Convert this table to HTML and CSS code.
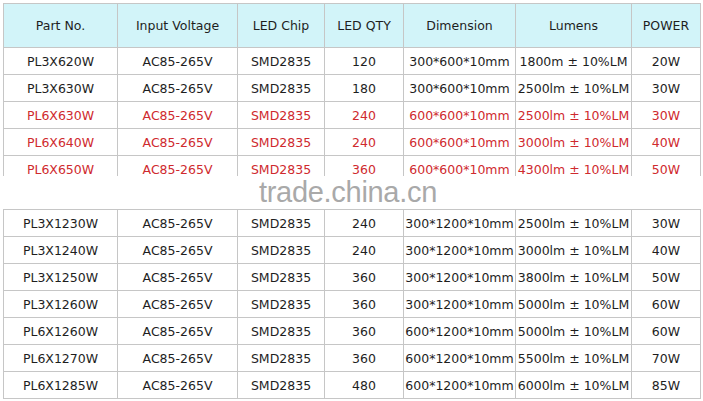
FILE: index.html
```html
<!DOCTYPE html>
<html>
<head>
<meta charset="utf-8">
<link rel="stylesheet" href="styles.css">
</head>
<body>
<div class="page">
  <div class="top">
    <table class="spec">
      <colgroup>
        <col class="c1"><col class="c2"><col class="c3"><col class="c4"><col class="c5"><col class="c6"><col class="c7">
      </colgroup>
      <tr class="head">
        <td>Part No.</td><td>Input Voltage</td><td>LED Chip</td><td>LED QTY</td><td>Dimension</td><td>Lumens</td><td>POWER</td>
      </tr>
      <tr><td>PL3X620W</td><td>AC85-265V</td><td>SMD2835</td><td>120</td><td>300*600*10mm</td><td>1800m ± 10%LM</td><td>20W</td></tr>
      <tr><td>PL3X630W</td><td>AC85-265V</td><td>SMD2835</td><td>180</td><td>300*600*10mm</td><td>2500lm ± 10%LM</td><td>30W</td></tr>
      <tr class="red"><td>PL6X630W</td><td>AC85-265V</td><td>SMD2835</td><td>240</td><td>600*600*10mm</td><td>2500lm ± 10%LM</td><td>30W</td></tr>
      <tr class="red"><td>PL6X640W</td><td>AC85-265V</td><td>SMD2835</td><td>240</td><td>600*600*10mm</td><td>3000lm ± 10%LM</td><td>40W</td></tr>
      <tr class="red"><td>PL6X650W</td><td>AC85-265V</td><td>SMD2835</td><td>360</td><td>600*600*10mm</td><td>4300lm ± 10%LM</td><td>50W</td></tr>
    </table>
  </div>
  <div class="band"><span class="mark">trade.china.cn</span></div>
  <table class="spec">
    <colgroup>
      <col class="c1"><col class="c2"><col class="c3"><col class="c4"><col class="c5"><col class="c6"><col class="c7">
    </colgroup>
    <tr><td>PL3X1230W</td><td>AC85-265V</td><td>SMD2835</td><td>240</td><td>300*1200*10mm</td><td>2500lm ± 10%LM</td><td>30W</td></tr>
    <tr><td>PL3X1240W</td><td>AC85-265V</td><td>SMD2835</td><td>240</td><td>300*1200*10mm</td><td>3000lm ± 10%LM</td><td>40W</td></tr>
    <tr><td>PL3X1250W</td><td>AC85-265V</td><td>SMD2835</td><td>360</td><td>300*1200*10mm</td><td>3800lm ± 10%LM</td><td>50W</td></tr>
    <tr><td>PL3X1260W</td><td>AC85-265V</td><td>SMD2835</td><td>360</td><td>300*1200*10mm</td><td>5000lm ± 10%LM</td><td>60W</td></tr>
    <tr><td>PL6X1260W</td><td>AC85-265V</td><td>SMD2835</td><td>360</td><td>600*1200*10mm</td><td>5000lm ± 10%LM</td><td>60W</td></tr>
    <tr><td>PL6X1270W</td><td>AC85-265V</td><td>SMD2835</td><td>360</td><td>600*1200*10mm</td><td>5500lm ± 10%LM</td><td>70W</td></tr>
    <tr><td>PL6X1285W</td><td>AC85-265V</td><td>SMD2835</td><td>480</td><td>600*1200*10mm</td><td>6000lm ± 10%LM</td><td>85W</td></tr>
  </table>
</div>
</body>
</html>
```
FILE: styles.css
```css
html, body {
  margin: 0;
  padding: 0;
  background: #ffffff;
}
.page {
  padding: 3px 0 0 3px;
  width: 700px;
  font-family: "DejaVu Sans", Verdana, sans-serif;
  font-size: 12.5px;
  color: #1e1e1e;
}
.top {
  height: 173px;
  overflow: hidden;
}
.spec {
  border-collapse: collapse;
  table-layout: fixed;
  width: 697px;
}
.c1 { width: 114px; }
.c2 { width: 120px; }
.c3 { width: 87px; }
.c4 { width: 79px; }
.c5 { width: 112px; }
.c6 { width: 116px; }
.c7 { width: 69px; }
.spec td {
  border: 1px solid #c6c6c6;
  padding: 0;
  height: 26px;
  text-align: center;
  white-space: nowrap;
  overflow: visible;
}
.spec .head td {
  height: 43px;
  background: #d2f4f9;
}
.spec .red td {
  color: #cf2a2e;
}
.band {
  height: 33px;
  display: flex;
  align-items: center;
  justify-content: center;
  padding-right: 10px;
  background: #ffffff;
}
.mark {
  font-family: "Liberation Sans", Arial, sans-serif;
  font-size: 29px;
  color: #a9a9a9;
  letter-spacing: -0.3px;
  line-height: 1;
}
```
